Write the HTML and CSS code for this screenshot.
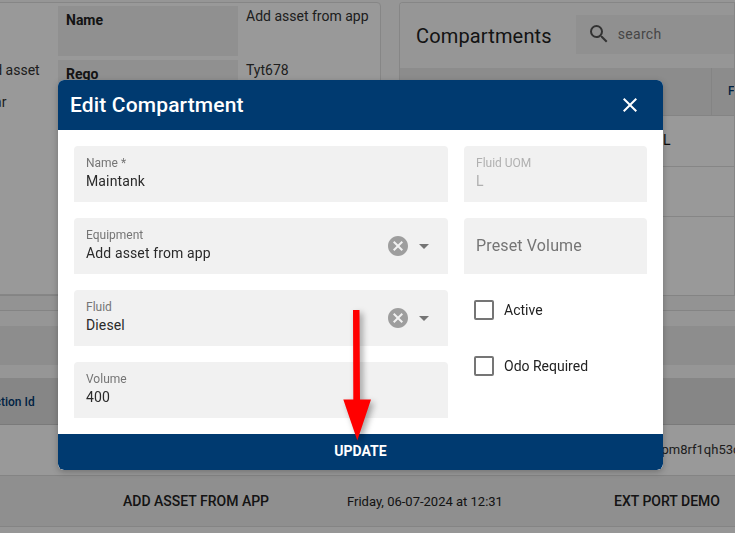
FILE: index.html
```html
<!DOCTYPE html>
<html lang="en">
<head>
<meta charset="utf-8">
<title>Edit Compartment</title>
<link rel="stylesheet" href="styles.css">
</head>
<body>
<main class="page">
  <section class="top">
    <div class="asset-card">
      <div class="side-col">
        <span class="side-text side-a">Installed asset</span>
        <span class="side-text side-b">Car</span>
      </div>
      <div class="detail-grid">
        <div class="detail-key">Name</div>
        <div class="detail-val">Add asset from app</div>
        <div class="detail-key">Rego</div>
        <div class="detail-val">Tyt678</div>
      </div>
    </div>
    <div class="comp-card">
      <div class="comp-head">
        <h2 class="comp-title">Compartments</h2>
        <div class="search">
          <svg class="search-icon" viewBox="0 0 24 24"><path d="M15.5 14h-.79l-.28-.27A6.47 6.47 0 0 0 16 9.5 6.5 6.5 0 1 0 9.5 16c1.61 0 3.09-.59 4.23-1.57l.27.28v.79l5 4.99L20.49 19l-4.99-5zm-6 0C7.01 14 5 11.99 5 9.5S7.01 5 9.5 5 14 7.01 14 9.5 11.99 14 9.5 14z"/></svg>
          <span>search</span>
        </div>
      </div>
      <div class="comp-columns"><span class="comp-col-f">Fluid</span></div>
      <div class="comp-row"><span class="comp-l">L</span></div>
      <div class="comp-row"></div>
    </div>
  </section>
  <section class="lower">
    <div class="lower-strip"></div>
    <div class="lower-band"></div>
    <div class="lower-head"><span class="tx-col">Transaction Id</span></div>
    <div class="lower-row"><span class="tx-id">cm8pm8rf1qh53c</span></div>
    <div class="lower-row lower-row-dark">
      <span class="cell-asset">ADD ASSET FROM APP</span>
      <span class="cell-date">Friday, 06-07-2024 at 12:31</span>
      <span class="cell-port">EXT PORT DEMO</span>
    </div>
  </section>
</main>

<div class="backdrop"></div>

<div class="dialog">
  <header class="dialog-head">
    <h1 class="dialog-title">Edit Compartment</h1>
    <svg class="close" viewBox="0 0 24 24"><path d="M19 6.41 17.59 5 12 10.59 6.41 5 5 6.41 10.59 12 5 17.59 6.41 19 12 13.41 17.59 19 19 17.59 13.41 12z"/></svg>
  </header>
  <div class="dialog-body">
    <div class="col-main">
      <div class="field"><label class="field-label">Name *</label><div class="field-value">Maintank</div></div>
      <div class="field field-select">
        <div><label class="field-label">Equipment</label><div class="field-value">Add asset from app</div></div>
        <div class="select-icons">
          <svg class="clear" viewBox="0 0 24 24"><path d="M12 2C6.47 2 2 6.47 2 12s4.47 10 10 10 10-4.47 10-10S17.53 2 12 2zm5 13.59L15.59 17 12 13.41 8.41 17 7 15.59 10.59 12 7 8.41 8.41 7 12 10.59 15.59 7 17 8.41 13.41 12 17 15.59z"/></svg>
          <span class="caret"></span>
        </div>
      </div>
      <div class="field field-select">
        <div><label class="field-label">Fluid</label><div class="field-value">Diesel</div></div>
        <div class="select-icons">
          <svg class="clear" viewBox="0 0 24 24"><path d="M12 2C6.47 2 2 6.47 2 12s4.47 10 10 10 10-4.47 10-10S17.53 2 12 2zm5 13.59L15.59 17 12 13.41 8.41 17 7 15.59 10.59 12 7 8.41 8.41 7 12 10.59 15.59 7 17 8.41 13.41 12 17 15.59z"/></svg>
          <span class="caret"></span>
        </div>
      </div>
      <div class="field"><label class="field-label">Volume</label><div class="field-value">400</div></div>
    </div>
    <div class="col-side">
      <div class="field field-disabled"><label class="field-label">Fluid UOM</label><div class="field-value">L</div></div>
      <div class="field field-empty">Preset Volume</div>
      <div class="check-row"><span class="check"></span><span>Active</span></div>
      <div class="check-row"><span class="check"></span><span>Odo Required</span></div>
    </div>
  </div>
  <button class="update" type="button">UPDATE</button>
</div>

<svg class="arrow" viewBox="0 0 40 140" width="40" height="140">
  <path class="arrow-shape" d="M16 1h6.500l.5 89.500h11L20.300 131.500 6.300 90.500h10z"/>
</svg>
</body>
</html>
```
FILE: styles.css
```css
* { box-sizing: border-box; }
html, body { margin: 0; height: 100%; }
body {
  width: 735px;
  height: 533px;
  overflow: hidden;
  font-family: Roboto, "Liberation Sans", sans-serif;
  background: #fafafa;
  position: relative;
}
.page { display: flex; flex-direction: column; height: 533px; }

.top { display: flex; height: 295px; padding-top: 2px; gap: 18px; flex: none; }
.asset-card {
  width: 391px;
  margin-left: -10px;
  flex: none;
  background: #fff;
  border: 1px solid #e0e0e0;
  border-radius: 4px;
  display: flex;
}
.side-col { width: 67px; flex: none; position: relative; overflow: hidden; }
.side-text { position: absolute; font-size: 14px; color: #333; white-space: nowrap; }
.side-a { top: 59px; left: -42px; }
.side-b { top: 91px; left: -6px; }
.detail-grid {
  display: grid;
  grid-template-columns: 180px 1fr;
  grid-auto-rows: 50px;
  row-gap: 4px;
  column-gap: 8px;
  padding-top: 3px;
  flex: 1;
}
.detail-key { background: #f0f0f0; font-size: 14px; font-weight: 700; color: #222; padding: 6px 8px; }
.detail-val { font-size: 14px; color: #333; padding-top: 2px; white-space: nowrap; }

.comp-card {
  flex: 1;
  min-width: 0;
  background: #fff;
  border: 1px solid #e0e0e0;
  border-bottom: none;
  border-radius: 4px 0 0 0;
  overflow: hidden;
}
.comp-head { height: 65px; display: flex; align-items: center; padding-left: 16px; gap: 24px; background: #fbfbfb; }
.comp-title { margin: 0; font-size: 20px; font-weight: 400; letter-spacing: .15px; color: #222; white-space: nowrap; }
.search {
  width: 300px;
  flex: none;
  height: 39px;
  background: #f1f1f1;
  margin-bottom: 3px;
  display: flex;
  align-items: center;
  padding-left: 11px;
  gap: 7px;
  font-size: 14px;
  color: #757575;
  letter-spacing: .3px;
}
.search-icon { width: 24px; height: 24px; fill: #555; }
.comp-columns { height: 48px; background: #e9e9e9; border-bottom: 1px solid #ddd; padding-left: 311px; display: flex; align-items: center; }
.comp-col-f { font-size: 12px; font-weight: 500; color: #003a70; border-left: 1px solid #ddd; height: 47px; line-height: 47px; padding-left: 16px; }
.comp-row { height: 50px; border-bottom: 1px solid #e0e0e0; position: relative; }
.comp-columns + .comp-row { height: 51px; }
.comp-l { position: absolute; left: 263px; top: 16px; font-size: 14px; color: #111; }

.lower { flex: 1; display: flex; flex-direction: column; overflow: hidden; }
.lower-strip { height: 16px; border-top: 1px solid #ddd; border-bottom: 1px solid #ddd; background: #f6f6f6; flex: none; }
.lower-band { height: 39px; margin-top: 15px; background: #ececec; flex: none; }
.lower-head { height: 47px; margin-top: 13px; padding-top: 2px; background: #e0e0e0; border-bottom: 1px solid #ccc; flex: none; display: flex; align-items: center; }
.tx-col { font-size: 12px; font-weight: 500; color: #003a70; margin-left: -42px; white-space: nowrap; }
.lower-row { height: 51px; border-bottom: 1px solid #ddd; flex: none; position: relative; background: #fff; overflow: hidden; }
.tx-id { position: absolute; left: 636px; top: 17px; font-size: 13px; color: #333; white-space: nowrap; }
.lower-row-dark { background: #eeeeee; font-size: 14px; color: #222; }
.cell-asset { position: absolute; left: 123px; top: 17px; font-weight: 500; }
.cell-date { position: absolute; left: 347px; top: 18px; font-size: 13px; }
.cell-port { position: absolute; left: 614px; top: 17px; font-weight: 500; }

.backdrop { position: fixed; inset: 0; background: rgba(0, 0, 0, .4); }

.dialog {
  position: absolute;
  left: 58px;
  top: 80px;
  width: 605px;
  height: 390px;
  background: #fff;
  border-radius: 6px;
  display: flex;
  flex-direction: column;
  overflow: hidden;
  box-shadow: 0 2px 6px rgba(0, 0, 0, .25);
}
.dialog-head {
  height: 50px;
  flex: none;
  background: #003a70;
  color: #fff;
  display: flex;
  align-items: center;
  justify-content: space-between;
  padding: 0 21px 0 12px;
}
.dialog-title { margin: 0; font-size: 21px; font-weight: 500; letter-spacing: .15px; }
.close { width: 24px; height: 24px; fill: #fff; }
.dialog-body {
  flex: 1;
  min-height: 0;
  padding: 16px 16px 0;
  display: grid;
  grid-template-columns: 374px 183px;
  column-gap: 16px;
  overflow: hidden;
}
.col-main, .col-side { display: flex; flex-direction: column; gap: 16px; }
.field {
  height: 56px;
  flex: none;
  background: #f1f1f1;
  border-radius: 4px 4px 0 0;
  padding: 9px 12px 0;
}
.field-label { display: block; font-size: 12px; line-height: 16px; color: #757575; }
.field-value { font-size: 14px; line-height: 20px; color: #2a2a2a; letter-spacing: .13px; }
.field-disabled .field-label, .field-disabled .field-value { color: #b0b0b0; }
.field-empty { font-size: 16px; line-height: 56px; padding-top: 0; color: #757575; letter-spacing: .15px; }
.field-select { display: flex; justify-content: space-between; }
.select-icons { display: flex; align-items: center; gap: 9px; height: 38px; margin-right: 7px; }
.clear { width: 24px; height: 24px; fill: #9e9e9e; }
.caret { width: 0; height: 0; border-left: 5px solid transparent; border-right: 5px solid transparent; border-top: 5px solid #757575; }
.check-row { display: flex; align-items: center; gap: 10px; height: 40px; padding-left: 10px; font-size: 14px; color: #222; flex: none; }
.check { width: 20px; height: 20px; border: 2px solid #757575; border-radius: 2px; flex: none; }

.update {
  height: 36px;
  flex: none;
  border: 0;
  background: #003a70;
  color: #fff;
  font: 700 14px Roboto, "Liberation Sans", sans-serif;
  border-radius: 0 0 6px 6px;
  padding: 0 0 2px;
  margin: 0;
}

.arrow { position: absolute; left: 337px; top: 309px; overflow: visible; }
.arrow-shape { fill: #f00; filter: drop-shadow(3px 3px 3px rgba(0, 0, 0, .35)); }
```
